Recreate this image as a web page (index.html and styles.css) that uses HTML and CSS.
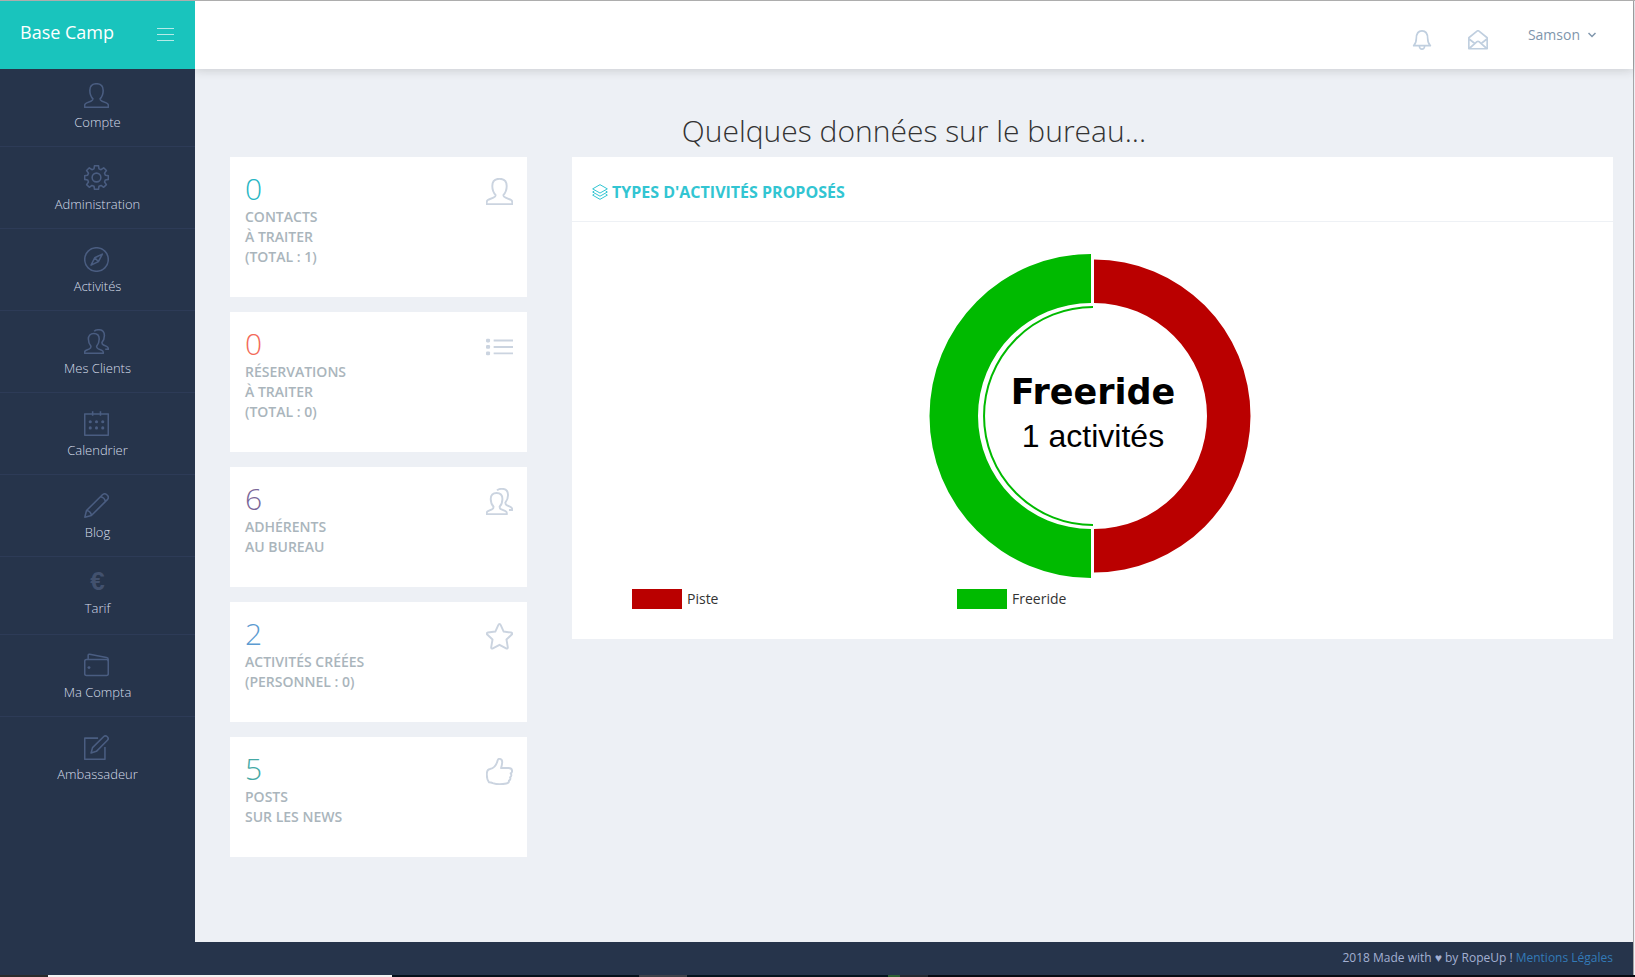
FILE: index.html
```html
<!DOCTYPE html>
<html lang="fr">
<head>
<meta charset="utf-8">
<title>Base Camp</title>
<link rel="stylesheet" href="styles.css">
</head>
<body>
<svg class="sprite" aria-hidden="true">
  <symbol id="user" viewBox="0 0 24 24"><path d="M8.6 15.2C6.9 13.500 5.600 10.800 5.600 7.200 5.600 3.200 8 .7 12 .7s6.400 2.500 6.400 6.500c0 3.600-1.300 6.300-3 8 0 1.400.7 1.800 2 2.300l4 1.600c1.400.6 2 1.200 2 2.400v1.800H.6v-1.800c0-1.200.6-1.800 2-2.400l4-1.600c1.300-.5 2-.9 2-2.300z"/></symbol>
  <symbol id="users" viewBox="0 0 24 24"><path d="M6.700 16.600C5.300 15 4.200 12.900 4.200 9.700c0-3.300 2-5.300 5.200-5.300s5.200 2 5.200 5.300c0 3.200-1 5.300-2.500 6.900 0 1.500.5 2 1.600 2.500l3.200 1.300c1.100.5 1.600 1 1.600 1.900v1H.6v-1c0-.9.500-1.400 1.600-1.900l3-1.300c1-.5 1.500-1 1.500-2.500z"/><path d="M9.800 2.200C10.800 1.100 12.300.7 14 .7c3.600 0 5.600 2.100 5.600 5.600 0 3.100-1.100 5.200-2.400 6.700 0 1.400.4 1.900 1.500 2.400l3 1.300c1.200.5 1.700 1.200 1.700 2.800h-3"/></symbol>
  <symbol id="gear" viewBox="0 0 24 24"><circle cx="12" cy="12" r="4.200"/><path d="M10.100.7h3.800l.5 3 2 .8 2.500-1.800 2.600 2.600-1.800 2.500.8 2 2.900.5v3.500l-2.900.5-.8 2 1.800 2.500-2.600 2.600-2.500-1.800-2 .8-.5 2.900h-3.800l-.5-2.900-2-.8-2.500 1.800-2.600-2.600 1.800-2.500-.8-2-2.900-.5v-3.500l2.900-.5.8-2-1.800-2.500 2.600-2.600 2.500 1.800 2-.8z"/></symbol>
  <symbol id="compass" viewBox="0 0 24 24"><circle cx="12" cy="12" r="11.300"/><path d="M17.600 6.800 13.800 14 6.800 17.400 10.300 10.300zM10.300 10.300l3.500 3.700"/></symbol>
  <symbol id="calendar" viewBox="0 0 24 24"><path d="M.7 2.800h22.600v20.400H.7zM8.300.3v4.300M15.800.3v4.300"/><g class="dots"><circle cx="6" cy="10.300" r="1.500"/><circle cx="12" cy="10.300" r="1.500"/><circle cx="18" cy="10.300" r="1.500"/><circle cx="6" cy="16.200" r="1.500"/><circle cx="12" cy="16.200" r="1.500"/><circle cx="18" cy="16.200" r="1.500"/></g></symbol>
  <symbol id="pencil" viewBox="0 0 24 24"><path d="M.8 23.200 2.400 16.800 17.700 1.700c1.300-1.300 3-1.300 4.200 0l.5.500c1.200 1.200 1.200 2.900 0 4.200L7.100 21.600zM2.400 16.800c2.400 0 4.600 2.100 4.700 4.800M15.800 3.600c2.200.2 4.400 2.300 4.700 4.700"/></symbol>
  <symbol id="wallet" viewBox="0 0 24 24"><rect x=".7" y="6.300" width="22.600" height="15.300" rx="1.600"/><path d="M4 6V2.500c0-1 .6-1.500 1.500-1.300l16 3.200c1 .2 1.700.7 1.700 1.600v2"/><g class="dots"><circle cx="4.800" cy="14" r="1.400"/></g></symbol>
  <symbol id="note" viewBox="0 0 24 24"><path d="M13.500 3H.7v20.300h19.400V11.500M6.800 17.300l1.400-5.200L19 1.500c.9-.9 2.200-.9 3.100 0l.4.400c.9.9.9 2.200 0 3.100L11.900 15.700z"/></symbol>
  <symbol id="list" viewBox="0 0 24 24"><path d="M6.800 6.700H24M6.800 12.400H24M6.800 18.100H24"/><g class="dots"><rect x="0" y="5" width="3.600" height="3.400" rx="1"/><rect x="0" y="10.700" width="3.600" height="3.400" rx="1"/><rect x="0" y="16.400" width="3.600" height="3.400" rx="1"/></g></symbol>
  <symbol id="star" viewBox="0 0 24 24"><path d="M12 .9c.5 0 .8.300 1 .8l2.700 5.900 6.600.9c1.100.2 1.300 1 .6 1.700l-4.700 4.500 1.200 6.900c.1 1-.6 1.500-1.500 1L12 19.400l-5.900 3.200c-.9.500-1.600 0-1.500-1l1.200-6.900-4.700-4.500c-.7-.7-.5-1.500.6-1.700l6.600-.9L11 1.700c.2-.5.500-.8 1-.8z"/></symbol>
  <symbol id="like" viewBox="0 0 24 24"><path d="M13.400 8.900h6.500c2.200 0 3.300 1 3.300 2.600 0 1.100-.5 1.800-1.300 2.200.9.800.9 2.600-.5 3.400.6 1.100.2 2.400-1 3 .2 1.100-.7 2.300-2.300 2.600-3.500.7-9.400.7-12.100-.4-1-.5-2-.7-3.300-.7C1.300 20 .7 17.600.7 14.700c0-2.500.6-4.600 2.800-4.900C7.200 9.100 9.500 5.500 10.300 2.300c.3-1.200 1-1.700 2-1.500 1.500.3 2.200 1.400 2.100 3.100-.1 1.800-.5 3.400-1 5z"/></symbol>
  <symbol id="bell" viewBox="0 0 24 24"><path d="M2 18.800c2.800-2.500 3.100-4 3.200-8.800.1-5.800 2.400-9 6.800-9s6.700 3.200 6.800 9c.1 4.800.4 6.300 3.200 8.800zM8.800 19.500c.3 2.300 1.500 3.500 3.200 3.500s2.900-1.200 3.200-3.500"/></symbol>
  <symbol id="mail" viewBox="0 0 24 24"><path d="M1 9.300 10.800 1.300q1.200-.8 2.400 0L23 9.300v13.200H1zM1 10.500l7.500 6M23 10.500l-7.500 6M1.500 22.200l9.300-8.200q1.200-.9 2.400 0l9.300 8.200"/></symbol>
  <symbol id="layers" viewBox="0 0 24 24"><path d="M12 1 23 7.300 12 13.600 1 7.300zM3.500 10.500 1 12l11 6.300L23 12l-2.500-1.500M3.500 15.200 1 16.700 12 23l11-6.300-2.500-1.500"/></symbol>
</svg>

<div class="shell">
  <aside class="sidebar">
    <div class="brand">
      <a class="brand-name" href="#">Base Camp</a>
      <button class="burger" type="button" aria-label="Menu"><span></span><span></span><span></span></button>
    </div>
    <nav class="menu">
      <a class="item" href="#"><svg class="icon"><use href="#user"/></svg>Compte</a>
      <a class="item" href="#"><svg class="icon"><use href="#gear"/></svg>Administration</a>
      <a class="item" href="#"><svg class="icon"><use href="#compass"/></svg>Activités</a>
      <a class="item" href="#"><svg class="icon"><use href="#users"/></svg>Mes Clients</a>
      <a class="item" href="#"><svg class="icon"><use href="#calendar"/></svg>Calendrier</a>
      <a class="item" href="#"><svg class="icon"><use href="#pencil"/></svg>Blog</a>
      <a class="item item-short" href="#"><span class="euro">€</span>Tarif</a>
      <a class="item" href="#"><svg class="icon"><use href="#wallet"/></svg>Ma Compta</a>
      <a class="item" href="#"><svg class="icon"><use href="#note"/></svg>Ambassadeur</a>
    </nav>
  </aside>

  <div class="page">
    <header class="topbar">
      <button class="top-btn" type="button" aria-label="Notifications"><svg class="icon"><use href="#bell"/></svg></button>
      <button class="top-btn" type="button" aria-label="Messages"><svg class="icon"><use href="#mail"/></svg></button>
      <button class="user-btn" type="button">Samson <svg class="chevron" viewBox="0 0 8 6"><path d="M.5 1 4 4.500 7.500 1"/></svg></button>
    </header>

    <main class="content">
      <h1 class="title">Quelques données sur le bureau...</h1>
      <div class="columns">
        <section class="stats">
          <article class="card"><div><p class="num teal">0</p><p class="label">Contacts<br>à traiter<br>(total : 1)</p></div><svg class="icon"><use href="#user"/></svg></article>
          <article class="card"><div><p class="num red">0</p><p class="label">Réservations<br>à traiter<br>(total : 0)</p></div><svg class="icon"><use href="#list"/></svg></article>
          <article class="card"><div><p class="num purple">6</p><p class="label">Adhérents<br>au bureau</p></div><svg class="icon"><use href="#users"/></svg></article>
          <article class="card"><div><p class="num blue">2</p><p class="label">Activités créées<br>(personnel : 0)</p></div><svg class="icon"><use href="#star"/></svg></article>
          <article class="card"><div><p class="num green">5</p><p class="label">Posts<br>sur les news</p></div><svg class="icon"><use href="#like"/></svg></article>
        </section>
        <section class="panel">
          <h2 class="panel-head"><svg class="icon"><use href="#layers"/></svg>Types d'activités proposés</h2>
          <svg class="donut" viewBox="-180 -170 360 340" role="img" aria-label="Freeride, 1 activités">
            <path fill="#ba0000" d="M1-156.500A156.500 156.500 0 0 1 1 156.500V113A113 113 0 0 0 1-113z"/>
            <path fill="#00ba00" d="M-2-162A161.500 162 0 0 0-2 162V113A113 113 0 0 1-2-113z"/>
            <path fill="none" stroke="#00ba00" stroke-width="2" d="M0-109A109 109 0 0 0 0 109"/>
            <text class="donut-name" x="0" y="-12">Freeride</text>
            <text class="donut-value" x="0" y="31">1 activités</text>
          </svg>
          <ul class="legend">
            <li><span class="swatch swatch-red"></span>Piste</li>
            <li><span class="swatch swatch-green"></span>Freeride</li>
          </ul>
        </section>
      </div>
    </main>
  </div>
</div>
<footer class="footer">2018 Made with ♥ by RopeUp ! <a href="#">Mentions Légales</a></footer>
<div class="taskbar"></div>
</body>
</html>
```
FILE: styles.css
```css
* { box-sizing: border-box; }

body {
  margin: 0;
  min-height: 100vh;
  display: flex;
  flex-direction: column;
  border-top: 1px solid #adadad;
  background: #edf0f5;
  color: #333;
  font: 14px/20px "Open Sans", "Noto Sans", sans-serif;
}

h1, h2, p, ul { margin: 0; padding: 0; }
button { padding: 0; border: 0; background: none; font: inherit; cursor: pointer; }
a { text-decoration: none; }

.sprite { position: absolute; width: 0; height: 0; }
.icon { flex: none; fill: none; stroke: currentColor; stroke-width: 1.5; stroke-linejoin: round; }
.dots { fill: currentColor; stroke: none; }

.shell { flex: 1; display: grid; grid-template-columns: 195px 1fr; }

.sidebar { position: relative; z-index: 1; background: #26344b; }
.brand {
  height: 68px;
  padding: 0 21px 6px 20px;
  display: flex;
  align-items: center;
  justify-content: space-between;
  background: #19c4bd;
}
.brand-name { color: #fff; font-size: 18px; line-height: 24px; }
.burger { width: 17px; display: grid; gap: 5px; margin-top: 5px; }
.burger span { height: 1px; background: #b5ebe8; }

.item {
  display: flex;
  flex-direction: column;
  align-items: center;
  gap: 5px;
  height: 82px;
  padding-top: 18px;
  border-bottom: 1px solid #2d3b57;
  color: #d5dcea;
  font-size: 13px;
  font-weight: 300;
  line-height: 18px;
}
.item:first-child { height: 78px; padding-top: 14px; }
.item:last-child { border-bottom: 0; }
.item .icon { width: 25px; height: 25px; margin-right: 3px; color: #4a5d81; }
.item-short { height: 78px; padding-top: 12px; }
.euro { color: #42516e; font: bold 26px/25px "Liberation Sans", sans-serif; }

.page { display: flex; flex-direction: column; border-right: 1px solid #a5a5a8; margin-right: 1px; }
.topbar {
  height: 68px;
  padding: 0 37px 0 0;
  display: flex;
  justify-content: flex-end;
  align-items: flex-start;
  background: #fff;
  box-shadow: 0 1px 10px rgba(50, 50, 50, .2);
}
.top-btn { display: flex; margin: 29px 36px 0 0; color: #c0cfdf; }
.top-btn .icon { width: 20px; height: 20px; stroke-width: 2; }
.user-btn { display: flex; align-items: center; gap: 8px; margin: 24px 0 0 4px; color: #7f96ac; }
.chevron { width: 8px; height: 6px; fill: none; stroke: #7f96ac; stroke-width: 1.5; }

.content { padding: 42px 20px 85px 35px; }
.title { margin: 0 15px 6px 0; text-align: center; font-size: 30px; font-weight: 300; line-height: 40px; }
.columns { display: grid; grid-template-columns: minmax(0, 297fr) minmax(0, 1041fr); gap: 45px; align-items: start; }

.stats { display: grid; gap: 15px; }
.card {
  display: flex;
  justify-content: space-between;
  padding: 15px 14px 30px 15px;
  background: #fff;
}
.card .icon { width: 27px; height: 27px; margin-top: 6px; color: #cbd4e0; stroke-width: 1.7; }
.num { margin-bottom: 1px; font-size: 30px; font-weight: 300; line-height: 34px; }
.label { color: #aab5bc; font-weight: 600; text-transform: uppercase; }
.teal { color: #27b6c4; }
.red { color: #f36a5a; }
.purple { color: #796799; }
.blue { color: #5c9bd1; }
.green { color: #45a9a5; }

.panel { background: #fff; padding-bottom: 30px; }
.panel-head {
  display: flex;
  align-items: center;
  gap: 4px;
  height: 65px;
  padding: 5px 20px 0;
  border-bottom: 1px solid #eef1f5;
  color: #32c5d2;
  font-size: 16px;
  font-weight: 700;
  text-transform: uppercase;
}
.panel-head .icon { width: 16px; height: 18px; stroke-width: 1.5; }
.donut { display: block; width: 360px; height: 340px; max-width: 100%; margin: 24px auto 3px; }
.donut text { text-anchor: middle; fill: #000; }
.donut .donut-name { font: bold 35px "DejaVu Sans", sans-serif; }
.donut .donut-value { font: 32px "Liberation Sans", sans-serif; }

.legend { display: grid; grid-template-columns: repeat(3, 1fr); padding: 0 6px 0 60px; list-style: none; }
.legend li { display: flex; align-items: center; gap: 5px; }
.swatch { width: 50px; height: 20px; }
.swatch-red { background: #ba0000; }
.swatch-green { background: #00ba00; }

.footer {
  padding: 7px 20px 8px;
  margin-right: 1px;
  border-right: 1px solid #a5a5a8;
  text-align: right;
  background: #26344b;
  color: #a3b0d2;
  font-size: 12px;
  line-height: 18px;
}
.footer a { color: #337ab7; }

.taskbar {
  height: 2px;
  background: linear-gradient(90deg, #2b2b2b 48px, #f2f2f2 48px 392px, #05101a 392px 639px, #3f4148 639px 687px, #05131d 687px 888px, #2d5d31 888px 900px, #242830 900px 928px, #070a12 928px);
}
```
